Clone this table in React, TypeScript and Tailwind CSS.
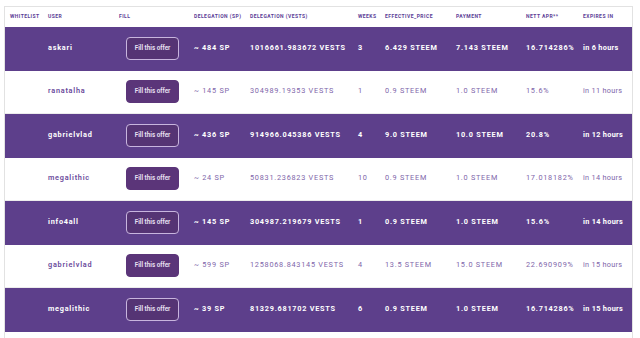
import React from "react";

type Row = {
  user: string;
  sp: string;
  vests: string;
  weeks: string;
  price: string;
  pay: string;
  apr: string;
  exp: string;
};

const rows: Row[] = [
  { user: "askari", sp: "~ 484 SP", vests: "1016661.983672 VESTS", weeks: "3", price: "6.429 STEEM", pay: "7.143 STEEM", apr: "16.714286%", exp: "in 6 hours" },
  { user: "ranatalha", sp: "~ 145 SP", vests: "304989.19353 VESTS", weeks: "1", price: "0.9 STEEM", pay: "1.0 STEEM", apr: "15.6%", exp: "in 11 hours" },
  { user: "gabrielvlad", sp: "~ 436 SP", vests: "914966.045386 VESTS", weeks: "4", price: "9.0 STEEM", pay: "10.0 STEEM", apr: "20.8%", exp: "in 12 hours" },
  { user: "megalithic", sp: "~ 24 SP", vests: "50831.236823 VESTS", weeks: "10", price: "0.9 STEEM", pay: "1.0 STEEM", apr: "17.018182%", exp: "in 14 hours" },
  { user: "info4all", sp: "~ 145 SP", vests: "304987.219679 VESTS", weeks: "1", price: "0.9 STEEM", pay: "1.0 STEEM", apr: "15.6%", exp: "in 14 hours" },
  { user: "gabrielvlad", sp: "~ 599 SP", vests: "1258068.843145 VESTS", weeks: "4", price: "13.5 STEEM", pay: "15.0 STEEM", apr: "22.690909%", exp: "in 15 hours" },
  { user: "megalithic", sp: "~ 39 SP", vests: "81329.681702 VESTS", weeks: "6", price: "0.9 STEEM", pay: "1.0 STEEM", apr: "16.714286%", exp: "in 15 hours" },
  { user: "", sp: "", vests: "", weeks: "", price: "", pay: "", apr: "", exp: "" },
];

const cols = "grid grid-cols-[38px_71px_75px_56px_108px_27px_71px_70px_57px_1fr] items-center pl-[5px]";

export default function App() {
  return (
    <div className="w-[640px] h-[338px] overflow-hidden bg-white pt-[6px] pl-[4px]" style={{ fontFamily: "Roboto, 'Liberation Sans', sans-serif" }}>
      <div className="w-[629px] border-l border-t border-r border-[#e2e2e2]">
        <div className={`${cols} h-[20px] text-[5px] font-bold tracking-[0.45px] uppercase text-[#5b3d96]`}>
          <div>Whitelist</div>
          <div>User</div>
          <div>Fill</div>
          <div>Delegation (SP)</div>
          <div>Delegation (Vests)</div>
          <div>Weeks</div>
          <div>Effective_Price</div>
          <div>Payment</div>
          <div>Nett APR**</div>
          <div>Expires in</div>
        </div>
        {rows.map((r, i) => {
          const dark = i % 2 === 0;
          return (
            <div
              key={i}
              className={`${cols} h-[43.5px] text-[7.3px] tracking-[0.75px] ${
                dark ? "bg-[#5d3f8b] text-white font-bold" : "bg-white text-[#8066aa] font-normal border-b border-[#ececec]"
              }`}
            >
              <div></div>
              <div className={dark ? "" : "font-semibold text-[#6a4a9c]"}>{r.user}</div>
              <div>
                {r.user && (
                  <button
                    className={`ml-[7px] w-[53px] h-[23px] rounded-[4px] text-[6.3px] font-semibold tracking-normal text-[#ece4f4] ${
                      dark ? "bg-[#553474] border border-[#c8b5de]" : "bg-[#5b3579] border border-[#5b3579]"
                    }`}
                  >
                    Fill this offer
                  </button>
                )}
              </div>
              <div>{r.sp}</div>
              <div className="whitespace-nowrap">{r.vests}</div>
              <div>{r.weeks}</div>
              <div className="whitespace-nowrap">{r.price}</div>
              <div className="whitespace-nowrap">{r.pay}</div>
              <div className="whitespace-nowrap">{r.apr}</div>
              <div className="whitespace-nowrap tracking-[0.3px]">{r.exp}</div>
            </div>
          );
        })}
      </div>
    </div>
  );
}
